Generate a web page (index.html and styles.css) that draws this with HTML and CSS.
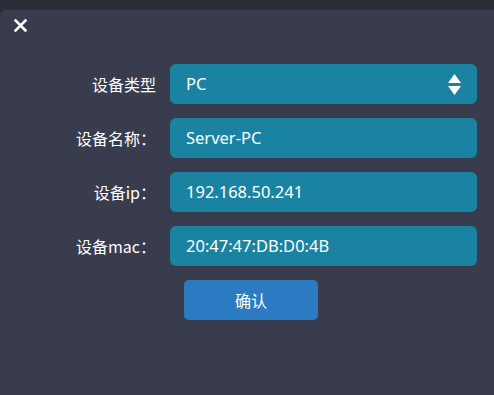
FILE: index.html
```html
<!DOCTYPE html>
<html lang="zh-CN">
<head>
    <meta charset="UTF-8">
    <meta name="viewport" content="width=device-width, initial-scale=1.0">
    <title>设备信息</title>
    <link rel="stylesheet" href="styles.css">
</head>
<body>
    <div class="panel">
        <div class="panel-head">
            <svg class="close" width="13" height="13" viewBox="0 0 13 13">
                <path d="M1.5 1.5 L11.5 11.5 M11.5 1.5 L1.5 11.5" stroke="#fff" stroke-width="2.6" stroke-linecap="square"/>
            </svg>
        </div>

        <form class="form">
            <label class="label">设备类型</label>
            <div class="field select">
                <span>PC</span>
                <svg class="arrows" width="13" height="21" viewBox="0 0 13 21">
                    <path d="M6.5 0 L13 9 L0 9 Z" fill="#fff"/>
                    <path d="M0 12 L13 12 L6.5 21 Z" fill="#fff"/>
                </svg>
            </div>

            <label class="label">设备名称：</label>
            <div class="field">Server-PC</div>

            <label class="label">设备ip：</label>
            <div class="field">192.168.50.241</div>

            <label class="label">设备mac：</label>
            <div class="field">20:47:47:DB:D0:4B</div>

            <div></div>
            <div class="actions">
                <button type="button" class="button">确认</button>
            </div>
        </form>
    </div>
</body>
</html>
```

FILE: styles.css
```css
html, body {
    margin: 0;
    padding: 0;
    background-color: #2b2e39;
    height: 100%;
}

body {
    padding-top: 10px;
    box-sizing: border-box;
    font-family: "Noto Sans", "Noto Sans CJK SC", sans-serif;
    color: #fff;
}

.panel {
    background-color: #383c4c;
    height: 100%;
    border-top-left-radius: 6px;
}

.panel-head {
    height: 54px;
    padding: 9px 0 0 14px;
    box-sizing: border-box;
}

.close {
    display: block;
}

.form {
    display: grid;
    grid-template-columns: 100px 307px;
    column-gap: 14px;
    row-gap: 14px;
    padding-left: 56px;
    margin: 0;
}

.label {
    text-align: right;
    font-size: 16px;
    line-height: 40px;
    white-space: nowrap;
    font-family: "Noto Sans CJK SC", sans-serif;
}

.field {
    height: 40px;
    line-height: 40px;
    background-color: #1a83a1;
    border-radius: 6px;
    padding: 0 16px;
    font-size: 16.5px;
    box-sizing: border-box;
}

.select {
    display: flex;
    align-items: center;
    justify-content: space-between;
}

.arrows {
    display: block;
}

.actions {
    padding-left: 14px;
}

.button {
    width: 134px;
    height: 40px;
    border: none;
    border-radius: 5px;
    background-color: #2b7bc2;
    color: #fff;
    font-size: 16px;
    font-family: "Noto Sans CJK SC", sans-serif;
}
```
